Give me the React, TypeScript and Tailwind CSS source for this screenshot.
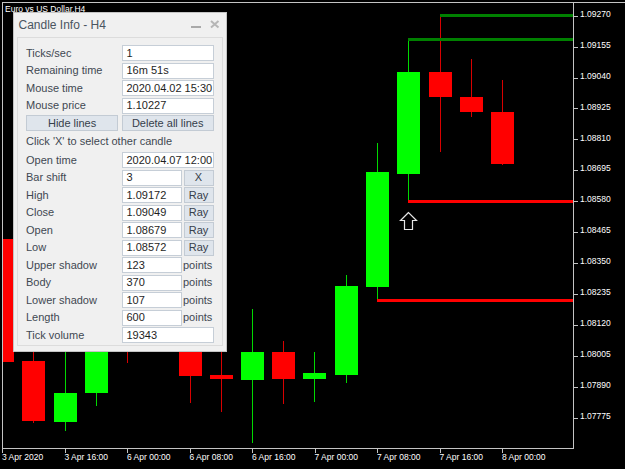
import React from "react";

type Candle = [number, number, number, number, number, boolean];

const candles: Candle[] = [
  [-9, 239, 362, 239, 362, false],
  [22, 361, 421, 330, 423, false],
  [54, 393, 422, 340, 431, true],
  [85, 330, 393, 320, 406, true],
  [116, 320, 345, 310, 363, false],
  [147, 300, 330, 290, 340, true],
  [179, 345, 376, 335, 403, false],
  [210, 375, 379, 340, 412, false],
  [241, 352, 380, 309, 443, true],
  [272, 352, 379, 341, 404, false],
  [303, 373, 379, 352, 402, true],
  [335, 286, 375, 275, 383, true],
  [366, 172, 287, 143, 301, true],
  [397, 72, 174, 39, 201, true],
  [429, 72, 97, 16, 152, false],
  [460, 97, 112, 59, 117, false],
  [491, 112, 164, 80, 165, false],
];

const prices = [
  "1.09270",
  "1.09155",
  "1.09040",
  "1.08925",
  "1.08810",
  "1.08695",
  "1.08580",
  "1.08465",
  "1.08350",
  "1.08235",
  "1.08120",
  "1.08005",
  "1.07890",
  "1.07775",
];

const times = [
  "3 Apr 2020",
  "3 Apr 16:00",
  "6 Apr 00:00",
  "6 Apr 08:00",
  "6 Apr 16:00",
  "7 Apr 00:00",
  "7 Apr 08:00",
  "7 Apr 16:00",
  "8 Apr 00:00",
];

function Chart() {
  return (
    <svg
      className="absolute left-0 top-0"
      width={625}
      height={469}
      viewBox="0 0 625 469"
    >
      <defs>
        <clipPath id="plot">
          <rect x={3} y={3} width={570} height={445} />
        </clipPath>
      </defs>
      <g clipPath="url(#plot)">
        {candles.map(([l, bt, bb, wt, wb, bull], i) => (
          <g key={i} shapeRendering="crispEdges">
            <rect
              x={l + 11}
              y={wt}
              width={1}
              height={wb - wt}
              fill={bull ? "#00d800" : "#d80000"}
            />
            <rect
              x={l}
              y={bt}
              width={23}
              height={Math.max(bb - bt, 1)}
              fill={bull ? "#00ff00" : "#ff0000"}
            />
          </g>
        ))}
        <g shapeRendering="crispEdges">
          <rect x={440} y={14} width={133} height={3} fill="#008000" />
          <rect x={408} y={38} width={165} height={3} fill="#008000" />
          <rect x={408} y={200} width={165} height={3} fill="#ff0000" />
          <rect x={377} y={299} width={196} height={3} fill="#ff0000" />
        </g>
        <path
          d="M408.5 212.5 L400.5 220.5 L404.5 220.5 L404.5 229.5 L412.5 229.5 L412.5 220.5 L416.5 220.5 Z"
          fill="#000"
          stroke="#e6e6e6"
          strokeWidth={1.2}
        />
      </g>
      <g shapeRendering="crispEdges" fill="#c4c4c4">
        <rect x={2} y={2} width={623} height={1} />
        <rect x={2} y={2} width={1} height={447} />
        <rect x={573} y={2} width={1} height={447} />
        <rect x={2} y={448} width={572} height={1} />
        {prices.map((_, k) => (
          <rect key={k} x={574} y={Math.round(15.7 + 30.92 * k)} width={4} height={1} />
        ))}
        {times.map((_, k) => (
          <rect key={k} x={Math.round(2 + 62.5 * k)} y={449} width={1} height={4} />
        ))}
      </g>
    </svg>
  );
}

function Label({ children }: { children: React.ReactNode }) {
  return (
    <div className="w-[95.5px] shrink-0 text-[11px] leading-none text-[#3f4852] whitespace-nowrap">
      {children}
    </div>
  );
}

function Field({ value, cls }: { value: string; cls: string }) {
  return (
    <div
      className={
        "h-4 shrink-0 border border-[#c6ced7] bg-white flex items-center pl-[4px] text-[11px] leading-none text-[#1e1e1e] whitespace-nowrap overflow-hidden " +
        cls
      }
    >
      {value}
    </div>
  );
}

function Btn({ text, cls }: { text: string; cls: string }) {
  return (
    <div
      className={
        "h-4 shrink-0 border border-[#c3cbd4] bg-[#dfe5ec] flex items-center justify-center text-[11px] leading-none text-[#36404a] whitespace-nowrap " +
        cls
      }
    >
      {text}
    </div>
  );
}

function Row({ label, children }: { label: string; children: React.ReactNode }) {
  return (
    <div className="flex h-4 items-center">
      <Label>{label}</Label>
      {children}
    </div>
  );
}

function Panel() {
  return (
    <div className="absolute left-[13px] top-[12px] w-[214px] h-[340px] border border-[#c4c4c4] bg-[#f0f0f0] flex flex-col font-['Liberation_Sans',Arial,sans-serif]">
      <div className="h-[24px] shrink-0 flex items-start pt-[6px] pl-[4.5px] pr-[6px]">
        <div className="flex-1 text-[12px] leading-none text-[#4a5560]">Candle Info - H4</div>
        <div className="flex items-start gap-[9px]">
          <svg width={10} height={12} viewBox="0 0 10 12">
            <rect x={0} y={7} width={10} height={2} fill="#a9a9a9" />
          </svg>
          <svg width={10} height={12} viewBox="0 0 10 12">
            <path d="M1 2 L8.5 8.5 M8.5 2 L1 8.5" stroke="#b6b6b6" strokeWidth={2} />
          </svg>
        </div>
      </div>
      <div className="mx-[3px] mb-[5px] flex-1 border border-[#dcdcdc] flex flex-col gap-[1.5px] pt-[7px] pl-[8px]">
        <Row label="Ticks/sec">
          <Field value="1" cls="w-[92px]" />
        </Row>
        <Row label="Remaining time">
          <Field value="16m 51s" cls="w-[92px]" />
        </Row>
        <Row label="Mouse time">
          <Field value="2020.04.02 15:30" cls="w-[92px]" />
        </Row>
        <Row label="Mouse price">
          <Field value="1.10227" cls="w-[92px]" />
        </Row>
        <div className="flex h-4 gap-[3.5px]">
          <Btn text="Hide lines" cls="w-[92.2px]" />
          <Btn text="Delete all lines" cls="w-[92px]" />
        </div>
        <div className="h-[18px] flex items-center text-[11px] leading-none text-[#3f4852] whitespace-nowrap">
          Click 'X' to select other candle
        </div>
        <Row label="Open time">
          <Field value="2020.04.07 12:00" cls="w-[92px]" />
        </Row>
        <Row label="Bar shift">
          <Field value="3" cls="w-[60px]" />
          <Btn text="X" cls="w-[30px] ml-[2px]" />
        </Row>
        <Row label="High">
          <Field value="1.09172" cls="w-[60px]" />
          <Btn text="Ray" cls="w-[30px] ml-[2px]" />
        </Row>
        <Row label="Close">
          <Field value="1.09049" cls="w-[60px]" />
          <Btn text="Ray" cls="w-[30px] ml-[2px]" />
        </Row>
        <Row label="Open">
          <Field value="1.08679" cls="w-[60px]" />
          <Btn text="Ray" cls="w-[30px] ml-[2px]" />
        </Row>
        <Row label="Low">
          <Field value="1.08572" cls="w-[60px]" />
          <Btn text="Ray" cls="w-[30px] ml-[2px]" />
        </Row>
        <Row label="Upper shadow">
          <Field value="123" cls="w-[60px]" />
          <span className="pl-[1.5px] text-[11px] leading-none text-[#3f4852]">points</span>
        </Row>
        <Row label="Body">
          <Field value="370" cls="w-[60px]" />
          <span className="pl-[1.5px] text-[11px] leading-none text-[#3f4852]">points</span>
        </Row>
        <Row label="Lower shadow">
          <Field value="107" cls="w-[60px]" />
          <span className="pl-[1.5px] text-[11px] leading-none text-[#3f4852]">points</span>
        </Row>
        <Row label="Length">
          <Field value="600" cls="w-[60px]" />
          <span className="pl-[1.5px] text-[11px] leading-none text-[#3f4852]">points</span>
        </Row>
        <Row label="Tick volume">
          <Field value="19343" cls="w-[92px]" />
        </Row>
      </div>
    </div>
  );
}

export default function App() {
  return (
    <div className="relative w-[625px] h-[469px] bg-black overflow-hidden font-['Liberation_Sans',Arial,sans-serif]">
      <Chart />
      <div className="absolute left-[5px] top-[5px] text-[8.5px] leading-none text-white whitespace-nowrap">
        Euro vs US Dollar,H4
      </div>
      <div className="absolute left-[580px] top-[-1.3px] flex flex-col">
        {prices.map((p) => (
          <div key={p} className="h-[30.92px] flex items-center text-[8.5px] leading-none text-white">
            {p}
          </div>
        ))}
      </div>
      <div className="absolute left-[2px] top-[453px] flex">
        {times.map((t) => (
          <div key={t} className="w-[62.5px] text-[8.5px] leading-none text-white whitespace-nowrap">
            {t}
          </div>
        ))}
      </div>
      <Panel />
    </div>
  );
}
